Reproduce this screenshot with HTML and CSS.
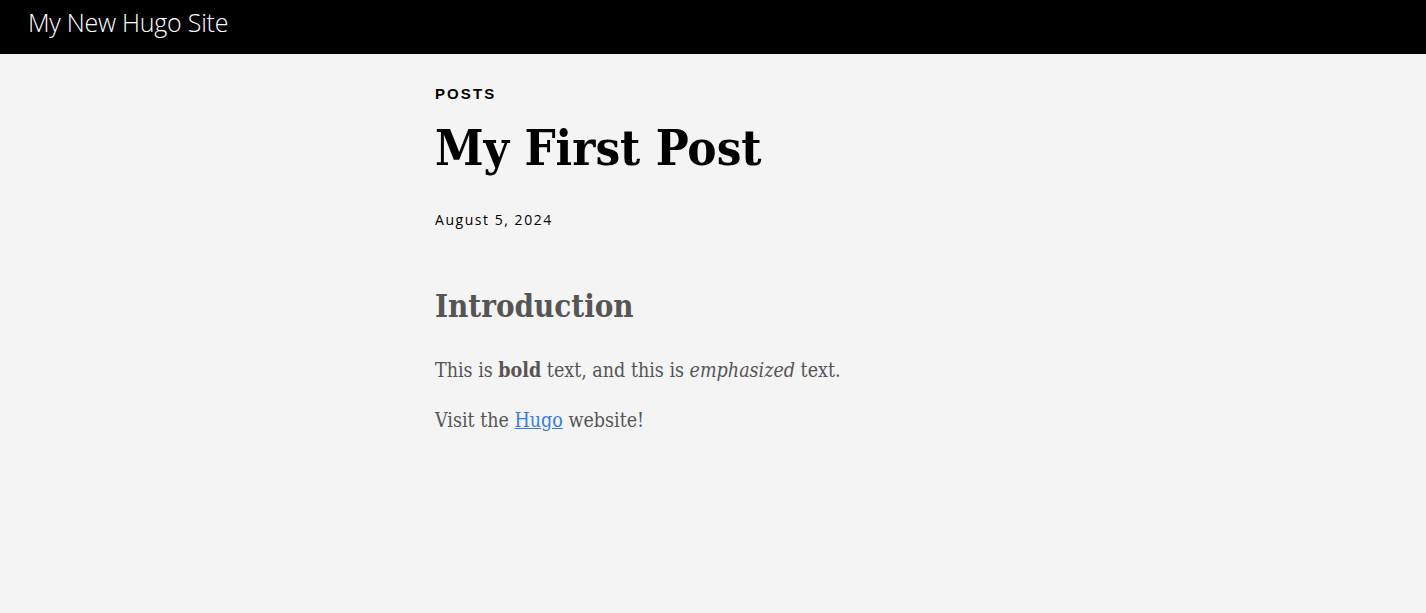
FILE: index.html
```html
<!DOCTYPE html>
<html lang="en">
<head>
    <meta charset="UTF-8">
    <meta name="viewport" content="width=device-width, initial-scale=1.0">
    <title>My First Post | My New Hugo Site</title>
    <link rel="stylesheet" href="styles.css">
</head>
<body>

    <header class="siteHeader">
        <a class="siteTitle" href="#">My New Hugo Site</a>
    </header>

    <main class="article">
        <aside class="section">Posts</aside>
        <h1 class="postTitle">My First Post</h1>
        <time class="postDate" datetime="2024-08-05">August 5, 2024</time>

        <div class="postBody">
            <h2>Introduction</h2>
            <p>This is <strong>bold</strong> text, and this is <em>emphasized</em> text.</p>
            <p>Visit the <a href="#">Hugo</a> website!</p>
        </div>
    </main>

</body>
</html>
```

FILE: styles.css
```css
body {
    margin:             0;
    background-color:   #f4f4f4;
    font-family:        "Liberation Sans", Arial, sans-serif;
}

.siteHeader {
    background-color:   #000;
    height:             54px;
    display:            flex;
    align-items:        center;
    padding:            0 28px 10px 28px;
    box-sizing:         border-box;
}

.siteTitle {
    color:              #fff;
    text-decoration:    none;
    font-family:        "Open Sans", sans-serif;
    font-weight:        300;
    font-size:          25px;
    letter-spacing:     -0.01em;
}

.article {
    width:              556px;
    margin:             0 auto;
    padding-top:        31px;
}

.section {
    font-size:          15px;
    font-weight:        bold;
    text-transform:     uppercase;
    letter-spacing:     0.14em;
    color:              #000;
}

.postTitle {
    font-family:        "DejaVu Serif Condensed", "DejaVu Serif", Georgia, serif;
    font-stretch:       condensed;
    font-size:          48.8px;
    line-height:        1.25;
    margin:             16px 0 31px 0;
    color:              #000;
}

.postDate {
    display:            block;
    font-family:        "Open Sans", sans-serif;
    font-size:          14px;
    letter-spacing:     0.11em;
    color:              #000;
}

.postBody {
    font-family:        "DejaVu Serif Condensed", "DejaVu Serif", Georgia, serif;
    font-stretch:       condensed;
    color:              #555;
    padding-top:        35px;
}

.postBody h2 {
    font-size:          31px;
    margin:             24px 0 32px 0;
}

.postBody p {
    font-size:          19.5px;
    line-height:        1.5;
    margin:             0 0 21px 0;
}

.postBody a         { color: #357edd; }
```
